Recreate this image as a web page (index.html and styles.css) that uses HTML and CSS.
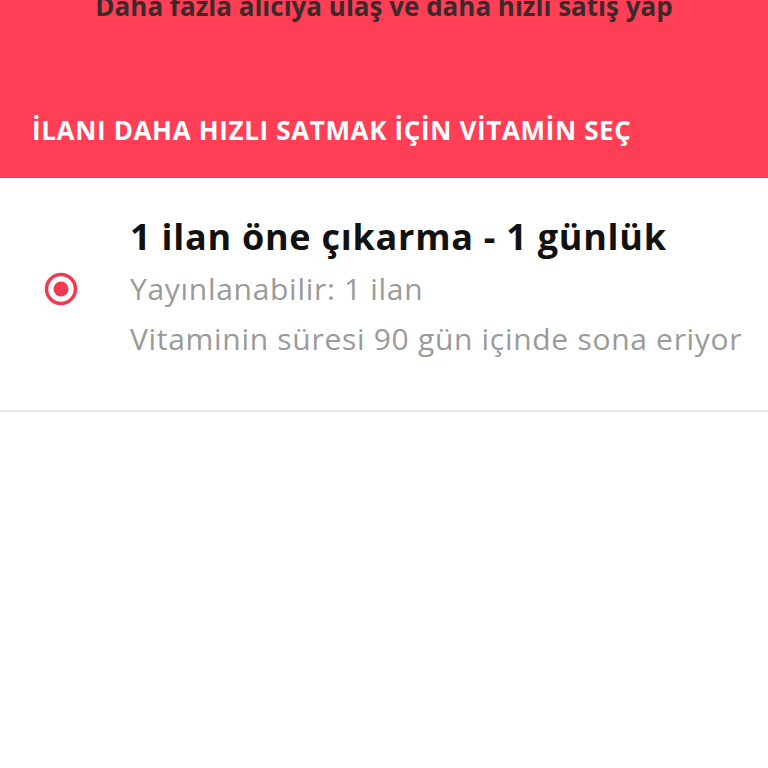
FILE: index.html
```html
<!DOCTYPE html>
<html lang="tr">
<head>
    <meta charset="UTF-8">
    <meta name="viewport" content="width=device-width, initial-scale=1.0">
    <title>Vitamin Seç</title>
    <link rel="stylesheet" href="styles.css">
</head>
<body>
    <div class="banner">
        <p class="banner-sub">Daha fazla alıcıya ulaş ve daha hızlı satış yap</p>
        <h2 class="banner-title">İLANI DAHA HIZLI SATMAK İÇİN VİTAMİN SEÇ</h2>
    </div>
    <div class="option">
        <div class="radio">
            <svg width="36" height="36" viewBox="0 0 36 36">
                <circle cx="18" cy="18" r="14.5" fill="none" stroke="#f03a52" stroke-width="3.5"/>
                <circle cx="18" cy="18" r="7.5" fill="#f03a52"/>
            </svg>
        </div>
        <div class="option-text">
            <h3 class="option-title">1 ilan öne çıkarma - 1 günlük</h3>
            <p class="option-line">Yayınlanabilir: 1 ilan</p>
            <p class="option-line">Vitaminin süresi 90 gün içinde sona eriyor</p>
        </div>
    </div>
</body>
</html>
```

FILE: styles.css
```css
body {
    font-family: "Open Sans", sans-serif;
    background-color: #fff;
    margin: 0;
    padding: 0;
}
.banner {
    background-color: #ff3f55;
    height: 178px;
    padding: 0 32px;
    box-sizing: border-box;
    overflow: hidden;
}
.banner-sub {
    margin: -12px 0 0;
    text-align: center;
    font-size: 26px;
    font-weight: bold;
    color: #3a2a2c;
    line-height: 36px;
}
.banner-title {
    margin: 88px 0 0;
    font-size: 26px;
    letter-spacing: 0.65px;
    font-weight: bold;
    color: #fff;
    line-height: 36px;
}
.option {
    display: flex;
    align-items: center;
    border-bottom: 2px solid #e8e8e8;
    padding: 36px 0 46px 43px;
}
.radio {
    width: 36px;
    height: 36px;
    margin-right: 51px;
}
.radio svg {
    display: block;
}
.option-title {
    margin: 0 0 4px;
    font-size: 36px;
    letter-spacing: 0.75px;
    font-weight: bold;
    color: #111;
    line-height: 46px;
}
.option-line {
    margin: 0;
    font-size: 30px;
    letter-spacing: 0.7px;
    color: #9a9a9a;
    line-height: 50px;
}
```
